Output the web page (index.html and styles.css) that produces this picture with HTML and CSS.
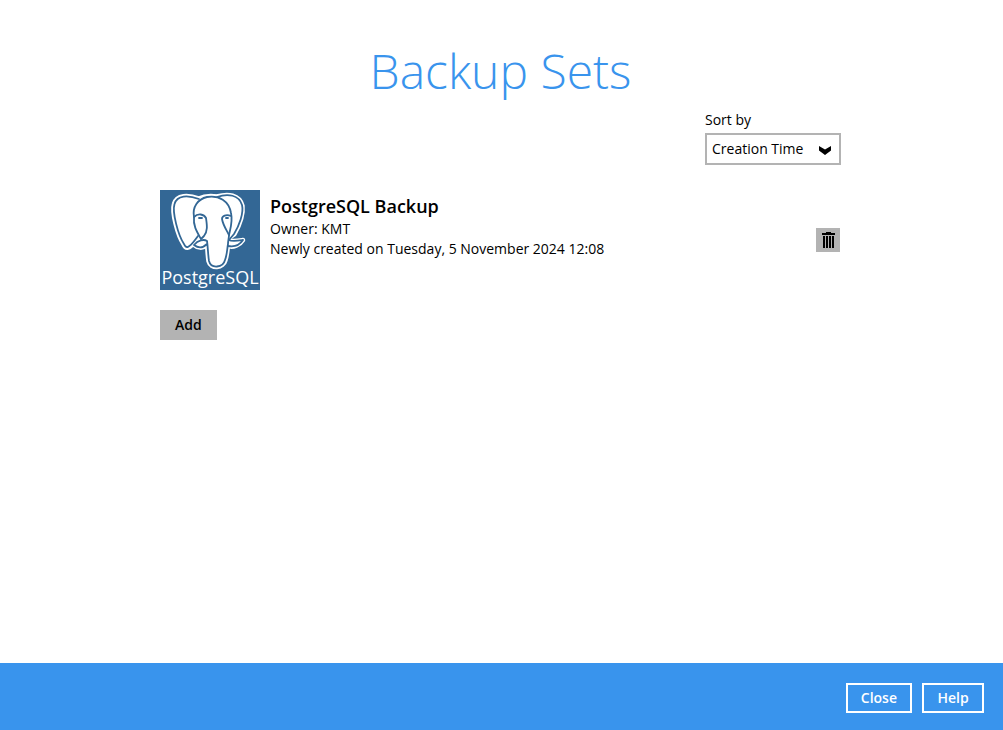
FILE: index.html
```html
<!DOCTYPE html>
<html lang="en">
<head>
<meta charset="utf-8">
<meta name="viewport" content="width=device-width, initial-scale=1">
<title>Backup Sets</title>
<link rel="stylesheet" href="styles.css">
</head>
<body>
<main class="main">
  <div class="content">
    <h1 class="title">Backup Sets</h1>
    <div class="sort">
      <label class="sort-label" for="sort">Sort by</label>
      <div class="select-wrap">
        <select class="select" id="sort">
          <option>Creation Time</option>
          <option>Name</option>
        </select>
        <svg class="select-arrow" viewBox="0 0 12 9" aria-hidden="true"><path d="M0 0 6 3.5 12 0V4.5L6 9 0 4.5Z"/></svg>
      </div>
    </div>
    <section class="set">
      <svg class="logo" viewBox="0 0 100 100" role="img" aria-label="PostgreSQL">
        <rect width="100" height="100" fill="#336795"/>
        <g fill="#fff" stroke="#fff" stroke-width="5.5" stroke-linejoin="round">
          <path d="M39 9C28 5 17 5 14.500 14C12 22 18 45 24 54C26 59 29 58 34 52L43 48L68 48L74 44C79 35 83 24 82 16C79 5 68 4 57 7C50 6 43 7 39 9Z"/>
          <path d="M47 47C48 58 48 65 49 71C51 79 63 78 65 70C67 64 67 58 68 50Z"/>
          <path stroke-width="4.500" d="M34 55C37 50 42 50 47 50V55C43 59 37 58 34 55ZM68 50C72 52 77 51 83 50C80 55 73 58 68 56Z"/>
        </g>
        <g fill="none" stroke="#336795" stroke-width="1.8" stroke-linecap="round" stroke-linejoin="round">
          <path d="M39 9C28 5 17 5 14.500 14C12 22 18 45 24 54C26 59 29 58 35 50L38 46"/>
          <path d="M34 27C32 17 38 9 47 7C59 5 69 11 71 23C73 32 70 40 69 45"/>
          <path d="M57 7C68 3 79 5 82 15C84 23 79 36 74 44L69 50"/>
          <path d="M34 27C38 23 44 24 46 28C47 35 48 41 44 46L41 49C37 42 33 36 34 27Z"/>
          <path d="M71 26C66 24 62 26 62 29C63 35 66 39 69 45C69 48 68 51 68 54C67 60 67 65 65 70C63 78 51 79 49 71C48 65 48 58 47 51C44 49 38 50 34 55C38 58 43 58 47 54"/>
          <path d="M69 50C72 52 77 51 83 50C79 56 73 57 68 56M39 28H42M66 28H68"/>
        </g>
        <text class="logo-text" x="50" y="94" text-anchor="middle">PostgreSQL</text>
      </svg>
      <div class="info">
        <h2 class="name">PostgreSQL Backup</h2>
        <p class="line">Owner: KMT</p>
        <p class="line">Newly created on Tuesday, 5 November 2024 12:08</p>
      </div>
      <button class="delete" type="button" aria-label="Delete backup set">
        <svg class="trash" viewBox="0 0 24 24" aria-hidden="true"><path d="M6 5H10V4H15V5H19V7H6ZM7 8H9V20H7ZM10 8H12V20H10ZM13 8H15V20H13ZM16 8H18V20H16Z"/></svg>
      </button>
    </section>
    <button class="add" type="button">Add</button>
  </div>
</main>
<footer class="footer">
  <button class="action" type="button">Close</button>
  <button class="action" type="button">Help</button>
</footer>
</body>
</html>
```
FILE: styles.css
```css
* { box-sizing: border-box; }
body {
  margin: 0;
  min-height: 100vh;
  display: flex;
  flex-direction: column;
  background: #fff;
  color: #000;
  font: 14px/20px "Open Sans", "Noto Sans", sans-serif;
}
button, select { font: inherit; color: inherit; border-radius: 0; }
button { cursor: pointer; }
.main { flex: 1; padding: 38px 2px 20px 0; }
.content { max-width: 681px; margin: 0 auto; }
.title {
  margin: 0;
  color: #3994ed;
  font-size: 48px;
  font-weight: 300;
  line-height: 66px;
  text-align: center;
}
.sort { width: 136px; margin: 6px 0 0 auto; }
.sort-label { display: block; }
.select-wrap { position: relative; margin-top: 3px; }
.select {
  appearance: none;
  display: block;
  width: 100%;
  height: 32px;
  padding: 0 24px 0 5px;
  border: 2px solid #b3b3b3;
  background: #fff;
}
.select-arrow {
  position: absolute;
  top: 13px;
  right: 10px;
  width: 12px;
  height: 9px;
  pointer-events: none;
}
.set { display: flex; gap: 10px; margin-top: 25px; }
.logo { flex: none; width: 100px; height: 100px; }
.logo-text { fill: #fff; font-size: 18px; }
.info { flex: 1; padding-top: 4px; }
.name { margin: 0; font-size: 18px; font-weight: 600; line-height: 25px; }
.line { margin: 0; }
.delete {
  align-self: center;
  width: 24px;
  height: 24px;
  margin-right: 1px;
  padding: 0;
  border: 0;
  background: #b3b3b3;
}
.trash { display: block; width: 24px; height: 24px; }
.add {
  margin-top: 20px;
  height: 30px;
  padding: 0 15px;
  border: 0;
  background: #b3b3b3;
  font-weight: 600;
}
.footer {
  display: flex;
  justify-content: flex-end;
  gap: 10px;
  padding: 20px 19px 17px;
  background: #3994ed;
}
.action {
  min-width: 62px;
  height: 30px;
  padding: 0 13px;
  border: 2px solid #fff;
  background: transparent;
  color: #fff;
  font-weight: 600;
}
```
